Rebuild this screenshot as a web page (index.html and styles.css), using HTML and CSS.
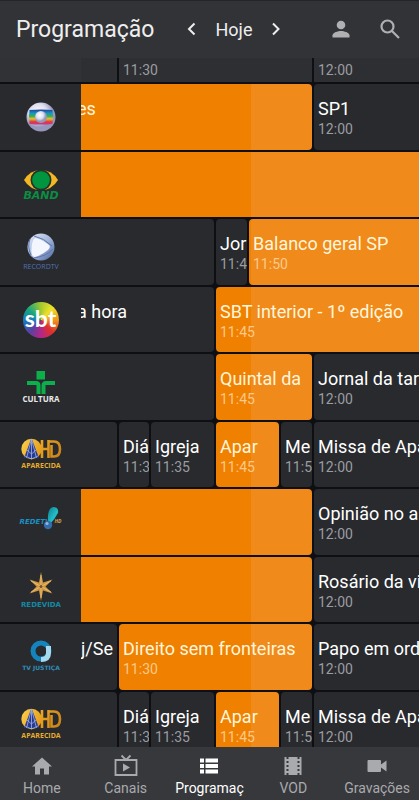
FILE: index.html
```html
<!DOCTYPE html>
<html lang="pt-BR">
<head>
    <meta charset="UTF-8">
    <meta name="viewport" content="width=device-width, initial-scale=1.0">
    <title>Programação</title>
    <link rel="stylesheet" href="styles.css">
</head>
<body>
    <header class="topbar">
        <h1>Programação</h1>
        <div class="day">
            <button class="icon-btn" aria-label="Dia anterior">
                <svg viewBox="0 0 24 24"><path d="M14.500 5.500L9 11L14.500 16.500" fill="none" stroke="#eee" stroke-width="2"/></svg>
            </button>
            <span class="day-name">Hoje</span>
            <button class="icon-btn" aria-label="Próximo dia">
                <svg viewBox="0 0 24 24"><path d="M9 5.500L14.500 11L9 16.500" fill="none" stroke="#eee" stroke-width="2"/></svg>
            </button>
        </div>
        <div class="actions">
            <button class="icon-btn" aria-label="Perfil">
                <svg viewBox="0 0 24 24"><g fill="#b0b0b2"><circle cx="12" cy="7" r="4.300"/><path d="M3.500 19.500v-2.200c0-2.900 5.600-4.400 8.500-4.400s8.500 1.500 8.500 4.400v2.200z"/></g></svg>
            </button>
            <button class="icon-btn" aria-label="Buscar">
                <svg viewBox="0 0 24 24"><g fill="none" stroke="#b0b0b2" stroke-width="2.200"><circle cx="9.500" cy="8.500" r="6"/><path d="M14 13l7 7"/></g></svg>
            </button>
        </div>
    </header>

    <main class="guide">
        <div class="row times">
            <div class="channel"></div>
            <div class="programs">
                <div class="slot s1"></div>
                <div class="slot s6"><time>11:30</time></div>
                <div class="slot s1"><time>12:00</time></div>
            </div>
        </div>

        <div class="row">
            <div class="channel">
                <svg viewBox="0 0 48 48" role="img" aria-label="Globo">
                    <defs>
                        <radialGradient id="silver" cx="40%" cy="35%"><stop offset="0" stop-color="#fff"/><stop offset=".6" stop-color="#dddfef"/><stop offset="1" stop-color="#9498bd"/></radialGradient>
                        <linearGradient id="screen" x2="0" y2="1"><stop offset="0" stop-color="#243f9c"/><stop offset=".25" stop-color="#1598c4"/><stop offset=".45" stop-color="#3bac4d"/><stop offset=".62" stop-color="#e2c42e"/><stop offset=".82" stop-color="#df3940"/><stop offset="1" stop-color="#d53088"/></linearGradient>
                    </defs>
                    <circle cx="24" cy="24" r="14.500" fill="url(#silver)"/>
                    <path d="M12.500 17Q24 16 35.500 17Q36.500 24 35.500 31Q24 32 12.500 31Q11.500 24 12.500 17z" fill="url(#screen)"/>
                    <circle cx="24" cy="24" r="6" fill="url(#silver)"/>
                </svg>
            </div>
            <div class="programs">
                <div class="slot live started s7"><h2 class="cut">es</h2></div>
                <div class="slot s1"><h2>SP1</h2><time>12:00</time></div>
            </div>
        </div>

        <div class="row">
            <div class="channel">
                <svg viewBox="0 0 48 48" role="img" aria-label="Band">
                    <path d="M7 19Q13 9 24 9t17 10Q35 29 24 29T7 19z" fill="#f3b822"/>
                    <circle cx="24" cy="19" r="10.500" fill="#24332a"/>
                    <circle cx="24" cy="19" r="8.800" fill="#009640"/>
                    <text class="logo-text wide slant" x="24" y="38" font-size="11" fill="#0b8d42">BAND</text>
                </svg>
            </div>
            <div class="programs">
                <div class="slot live started s8"></div>
            </div>
        </div>

        <div class="row">
            <div class="channel">
                <svg viewBox="0 0 48 48" role="img" aria-label="Record TV">
                    <defs><linearGradient id="record" x2="1" y2="1"><stop offset="0" stop-color="#e3eaf8"/><stop offset=".5" stop-color="#a3b6db"/><stop offset="1" stop-color="#4b659e"/></linearGradient></defs>
                    <circle cx="24" cy="19" r="13.500" fill="url(#record)"/>
                    <path d="M18 10Q23 10 32 17Q34 19 31 22Q25 27 18 29Q15 29 14.500 25Q14 13 18 10z" fill="#f3f6ff"/>
                    <path d="M13 11Q10 19 14 27M17 8Q27 10 35 18M17 30Q30 28 36 21" fill="none" stroke="#5a76ad" stroke-width="1"/>
                    <text class="logo-text light" x="24" y="41" font-size="7" fill="#5272b3">RECORDTV</text>
                </svg>
            </div>
            <div class="programs">
                <div class="slot started s4"></div>
                <div class="slot s1"><h2>Jor</h2><time>11:45</time></div>
                <div class="slot live s3"><h2>Balanco geral SP</h2><time>11:50</time></div>
            </div>
        </div>

        <div class="row">
            <div class="channel">
                <div class="sbt">sbt</div>
            </div>
            <div class="programs">
                <div class="slot started s4"><h2 class="cut">a hora</h2></div>
                <div class="slot live s4"><h2>SBT interior - 1º edição</h2><time>11:45</time></div>
            </div>
        </div>

        <div class="row">
            <div class="channel">
                <svg viewBox="0 0 48 48" role="img" aria-label="Cultura">
                    <path d="M19.500 8h8.500v8.500h-8.500zM10 18h9q4.500 0 4.500 4.500v8.500h-4V22H10zM38 18h-9q-4.500 0-4.500 4.500v8.500h4V22H38z" fill="#0bb04b"/>
                    <text class="logo-text" x="24" y="39" font-size="8" fill="#e8e8e8">CULTURA</text>
                </svg>
            </div>
            <div class="programs">
                <div class="slot started s4"></div>
                <div class="slot live s3"><h2>Quintal da</h2><time>11:45</time></div>
                <div class="slot s1"><h2>Jornal da tarde</h2><time>12:00</time></div>
            </div>
        </div>

        <div class="row">
            <div class="channel">
                <svg viewBox="0 0 48 48" role="img" aria-label="Aparecida HD">
                    <defs>
                        <linearGradient id="gold" gradientUnits="userSpaceOnUse" x1="4" y1="8" x2="44" y2="28"><stop offset="0" stop-color="#fbd24d"/><stop offset=".5" stop-color="#e7a01f"/><stop offset="1" stop-color="#c58019"/></linearGradient>
                        <symbol id="aparecida" viewBox="0 0 48 48">
                            <circle cx="14.500" cy="18" r="10.200" fill="url(#gold)"/>
                            <path d="M14.500 7L22 27H7z" fill="#293a8e"/>
                            <path d="M14.500 8l-5 19M14.500 8v20M14.500 8l5 19M10 19l4.500 4 4.500-4M8 25l6.500 3 6.500-3" fill="none" stroke="#9eb3e2" stroke-width=".8"/>
                            <path d="M25 9v18M31.500 9v18M25 18h6.500M32 10.500h5q6 0 6 7.500t-6 7.500h-2.500V14" fill="none" stroke="url(#gold)" stroke-width="2.600"/>
                            <text class="logo-text" x="24" y="37" font-size="7" fill="#e7ad2d">APARECIDA</text>
                        </symbol>
                    </defs>
                    <use href="#aparecida"/>
                </svg>
            </div>
            <div class="programs">
                <div class="slot started s1"></div>
                <div class="slot s1"><h2>Diá</h2><time>11:30</time></div>
                <div class="slot s2"><h2>Igreja</h2><time>11:35</time></div>
                <div class="slot live s2"><h2>Apar</h2><time>11:45</time></div>
                <div class="slot s1"><h2>Me</h2><time>11:55</time></div>
                <div class="slot s1"><h2>Missa de Aparecida</h2><time>12:00</time></div>
            </div>
        </div>

        <div class="row">
            <div class="channel">
                <svg viewBox="0 0 48 48" role="img" aria-label="RedeTV HD">
                    <defs><linearGradient id="teal" x2="1" y2="1"><stop offset="0" stop-color="#0d7d90"/><stop offset=".6" stop-color="#23bfca"/><stop offset="1" stop-color="#116a83"/></linearGradient></defs>
                    <text class="logo-text wide slant" x="18" y="26" font-size="7" fill="#1b8fc2">REDETV</text>
                    <path d="M31 25Q30 10 36 9Q42 9 41 15Q38 21 33 26z" fill="url(#teal)"/>
                    <circle cx="31" cy="27" r="4.200" fill="#356cac"/>
                    <circle cx="30" cy="25.500" r="1.600" fill="#91b7e1"/>
                    <text class="logo-text slant" x="41" y="25" font-size="5" fill="#dda24d">HD</text>
                </svg>
            </div>
            <div class="programs">
                <div class="slot live started s7"></div>
                <div class="slot s1"><h2>Opinião no ar</h2><time>12:00</time></div>
            </div>
        </div>

        <div class="row">
            <div class="channel">
                <svg viewBox="0 0 48 48" role="img" aria-label="Rede Vida">
                    <path d="M24 6l2 10.500 9.500-3-7 7 7 7-9.500-3L24 35l-2-10.500-9.500 3 7-7-7-7 9.500 3z" fill="#cf9741"/>
                    <path d="M24 9v23M14 15l20 11M34 15L14 26" stroke="#f1cf86" stroke-width=".7"/>
                    <circle cx="24" cy="20.500" r="1.500" fill="#78502a"/>
                    <text class="logo-text wide" x="24" y="41" font-size="7" fill="#1688a2">REDEVIDA</text>
                </svg>
            </div>
            <div class="programs">
                <div class="slot live started s7"></div>
                <div class="slot s1"><h2>Rosário da vida</h2><time>12:00</time></div>
            </div>
        </div>

        <div class="row">
            <div class="channel">
                <svg viewBox="0 0 48 48" role="img" aria-label="TV Justiça">
                    <circle cx="24" cy="18" r="8" fill="none" stroke="#1584bd" stroke-width="5"/>
                    <path d="M31.500 13v7q0 6.500-7.500 6.500" fill="none" stroke="#a6d9ee" stroke-width="5"/>
                    <text class="logo-text wide" x="24" y="37" font-size="6" fill="#2e8eba">TV JUSTIÇA</text>
                </svg>
            </div>
            <div class="programs">
                <div class="slot started s1"><h2>j/Se</h2></div>
                <div class="slot live s6"><h2>Direito sem fronteiras</h2><time>11:30</time></div>
                <div class="slot s1"><h2>Papo em ordem</h2><time>12:00</time></div>
            </div>
        </div>

        <div class="row">
            <div class="channel">
                <svg viewBox="0 0 48 48" role="img" aria-label="Aparecida HD"><use href="#aparecida"/></svg>
            </div>
            <div class="programs">
                <div class="slot started s1"></div>
                <div class="slot s1"><h2>Diá</h2><time>11:30</time></div>
                <div class="slot s2"><h2>Igreja</h2><time>11:35</time></div>
                <div class="slot live s2"><h2>Apar</h2><time>11:45</time></div>
                <div class="slot s1"><h2>Me</h2><time>11:55</time></div>
                <div class="slot s1"><h2>Missa de Aparecida</h2><time>12:00</time></div>
            </div>
        </div>
    </main>

    <nav class="tabs">
        <a href="#home">
            <svg viewBox="0 0 24 24"><path d="M10 20.500v-6h4v6h5v-8h3L12 3.500 2 12.500h3v8z" fill="currentColor"/></svg>
            Home
        </a>
        <a href="#canais">
            <svg viewBox="0 0 24 24"><path d="M1.500 6h21v15h-21zM7.500 1.500L12 6l4.500-4.500" fill="none" stroke="currentColor" stroke-width="1.800"/><path d="M9 9.500v8l7-4z" fill="currentColor"/></svg>
            Canais
        </a>
        <a href="#programacao" class="active">
            <svg viewBox="0 0 24 24"><path d="M3 4.500h4v4H3zM8.500 4.500H21v4H8.500zM3 10h4v4H3zM8.500 10H21v4H8.500zM3 15.500h4v4H3zM8.500 15.500H21v4H8.500z" fill="currentColor"/></svg>
            Programaç
        </a>
        <a href="#vod">
            <svg viewBox="0 0 24 24"><path fill-rule="evenodd" d="M3.500 3h2v2h2V3h9v2h2V3h2v18h-2v-2h-2v2h-9v-2h-2v2h-2zM5.500 7v2h2V7zM5.500 11v2h2v-2zM5.500 15v2h2v-2zM16.500 7v2h2V7zM16.500 11v2h2v-2zM16.500 15v2h2v-2z" fill="currentColor"/></svg>
            VOD
        </a>
        <a href="#gravacoes">
            <svg viewBox="0 0 24 24"><path d="M3.500 6H15q1 0 1 1v3.500l5.500-4v11l-5.500-4V17q0 1-1 1H3.500q-1 0-1-1V7q0-1 1-1z" fill="currentColor"/></svg>
            Gravações
        </a>
    </nav>
</body>
</html>
```
FILE: styles.css
```css
* {
    box-sizing: border-box;
}

body {
    display: flex;
    flex-direction: column;
    height: 100vh;
    margin: 0;
    background: #0e0f12;
    color: #fff;
    font-family: Roboto, sans-serif;
    overflow: hidden;
}

h1, h2 {
    margin: 0;
}

.topbar {
    display: flex;
    align-items: center;
    flex: none;
    height: 58px;
    padding: 0 17px 0 16px;
    background: #323337;
    border-top: 1px solid #242529;
    color: #eee;
}

.topbar h1 {
    width: 136px;
    font-size: 23px;
    font-weight: 400;
    line-height: 28px;
}

.day {
    display: flex;
    align-items: center;
    margin-left: 28px;
}

.day-name {
    width: 60px;
    font-size: 18px;
    line-height: 24px;
    text-align: center;
}

.actions {
    display: flex;
    gap: 25px;
    margin-left: auto;
}

.icon-btn {
    width: 24px;
    height: 24px;
    padding: 0;
    border: 0;
    background: none;
    cursor: pointer;
}

.icon-btn svg {
    display: block;
}

/* Programme grid */
.guide {
    flex: 1;
    min-height: 0;
    overflow: hidden;
}

.row {
    display: flex;
    height: 67px;
    padding-bottom: 2px;
}

.row:nth-child(even) {
    height: 68px;
}

.row.times {
    height: 26px;
}

.channel {
    display: flex;
    align-items: center;
    justify-content: center;
    flex: none;
    width: 81px;
    background: #282a2e;
}

.channel svg {
    width: 48px;
    height: 48px;
}

/* one column for each 5 minutes from 11:30 to 12:00 */
.programs {
    display: grid;
    flex: 1;
    min-width: 0;
    grid-template-columns: 38px 32px 33px 32px 33px 32px 33px minmax(0, 1fr);
}

.slot {
    min-width: 0;
    margin-right: 2px;
    padding: 13px 0 0 4px;
    border-radius: 4px;
    background: #282a2e;
    overflow: hidden;
    white-space: nowrap;
}

.slot:last-child {
    margin-right: 0;
    border-top-right-radius: 0;
    border-bottom-right-radius: 0;
}

.slot.started {
    padding-left: 0;
    border-top-left-radius: 0;
    border-bottom-left-radius: 0;
}

.slot h2 {
    font-size: 18px;
    font-weight: 400;
    line-height: 24px;
}

.slot h2.cut {
    text-indent: -4px;
}

.slot time {
    display: block;
    color: #9b9ca0;
    font-size: 14px;
    line-height: 16px;
}

/* the part already shown is darker */
.slot.live {
    background: linear-gradient(to right, #f08000 251px, #f08a1a 251px) fixed;
    color: #fff6dc;
}

.slot.live time {
    color: #fbc98c;
}

.times .channel {
    background: #313236;
}

.times .slot {
    padding-top: 4px;
    border-radius: 0;
    background: #2e2f33;
}

.s1 { grid-column: span 1; }
.s2 { grid-column: span 2; }
.s3 { grid-column: span 3; }
.s4 { grid-column: span 4; }
.s6 { grid-column: span 6; }
.s7 { grid-column: span 7; }
.s8 { grid-column: span 8; }

/* Channel logos */
.logo-text {
    font-family: "Open Sans", sans-serif;
    font-weight: 700;
    text-anchor: middle;
}

.logo-text.slant {
    font-style: italic;
}

.logo-text.wide {
    font-family: "DejaVu Sans", sans-serif;
}

.logo-text.light {
    font-weight: 400;
}

.sbt {
    width: 36px;
    height: 36px;
    border-radius: 50%;
    background: conic-gradient(#a4c92d, #eee22a 12%, #f0941e 25%, #df302b 38%, #b42688 50%, #5842a0 62%, #1879c0 74%, #17a67f 86%, #a4c92d);
    font-family: Lato, sans-serif;
    font-size: 23px;
    font-weight: 700;
    line-height: 32px;
    text-align: center;
}

/* Bottom tabs */
.tabs {
    display: grid;
    grid-template-columns: repeat(5, 1fr);
    flex: none;
    height: 53px;
    padding-top: 7px;
    background: #37383c;
}

.tabs a {
    display: flex;
    flex-direction: column;
    align-items: center;
    min-width: 0;
    color: #a9aaad;
    font-size: 14px;
    line-height: 20px;
    text-decoration: none;
}

.tabs svg {
    width: 24px;
    height: 24px;
    flex: none;
}

.tabs .active {
    color: #fff;
}
```
